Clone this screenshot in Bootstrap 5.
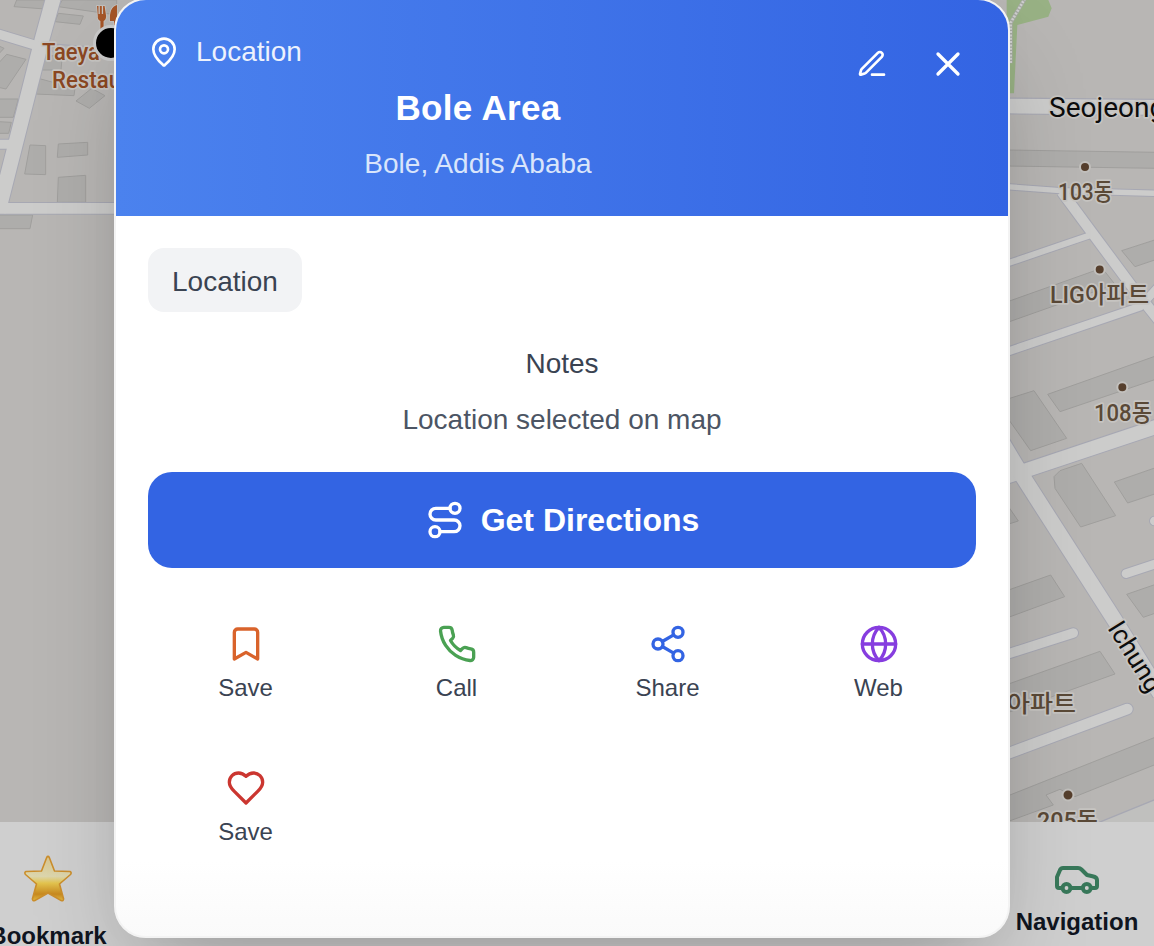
<!DOCTYPE html>
<html lang="en">
<head>
<meta charset="utf-8">
<meta name="viewport" content="width=device-width, initial-scale=1">
<title>Bole Area</title>
<link href="https://cdn.jsdelivr.net/npm/bootstrap@5.3.0/dist/css/bootstrap.min.css" rel="stylesheet">
<style>
body{font-family:"Liberation Sans",Arial,sans-serif;background:#b8b6b4;height:946px}
.map-layer{inset:0;width:1154px;height:822px}
.road{fill:none;stroke:#cccccb}
.road-edge{fill:none;stroke:#a7a8b3}
.bldg{fill:#aeadab;stroke:#a09f9d}
.map-label{font-family:Roboto,"Noto Sans CJK KR",sans-serif;paint-order:stroke;stroke:#c6c4c1;stroke-width:3.5px;stroke-linejoin:round;fill:#5a4937;font-weight:500;font-size:24px}
.bottom-bar{top:822px;height:124px;background:#cfcfcf;color:#10151f;font-size:24px;line-height:32px;font-weight:700}
.bottom-bar svg{flex:none}
.tab-bookmark{width:140px;margin-left:-22px;padding-top:30px}
.tab-nav{width:154px;padding-top:34px}
.place-sheet{width:896px;height:940px;margin:-2px 0 0 114px;border:2px solid #f3f3f3;border-radius:32px;box-shadow:0 50px 100px -24px rgba(0,0,0,.25),0 0 44px rgba(0,0,0,.02);background:linear-gradient(#fff 92%,#fafafa)}
.sheet-head{background:linear-gradient(90deg,#4b82ee,#3364e3);padding:32px;height:216px;border-radius:30px 30px 0 0;color:#fff}
.head-main{margin-right:36px}
.fs-body{font-size:28px;line-height:40px}
.kind{opacity:.9}
.place-title{font-size:35px;letter-spacing:.35px;line-height:56px;font-weight:700}
.place-sub{color:#d9e5fb}
.head-btn{width:56px;height:64px;color:#fff}
.ico{fill:none;stroke:currentColor;stroke-width:2;stroke-linecap:round;stroke-linejoin:round;display:block;flex:none}
.sheet-body{padding:32px}
.tag{background:#f2f3f5;color:#3a4352;border-radius:16px;padding:14px 24px 10px}
.c-700{color:#3a4352}.c-600{color:#4c5564}
.directions{background:#3364e3;color:#fff;height:96px;border-radius:24px;font-size:32px;font-weight:700;margin-top:32px}
.directions:hover{background:#2b57cf;color:#fff}
.actions{display:grid;grid-template-columns:repeat(4,1fr);gap:16px;margin-top:32px}
.action{height:128px;padding:24px 0;font-size:24px;line-height:32px}
</style>
</head>
<body class="position-relative overflow-hidden">
<svg class="map-layer position-absolute" viewBox="0 0 1154 822" aria-hidden="true">
  <!-- west side, drawn at three units per pixel -->
  <g transform="scale(.33333)" stroke-width="3">
    <g class="bldg">
      <path d="M50 0H150L135 27 42 20Z M187 0 175 20 350 45V0Z M175 40 250 48 240 73 165 65Z M-5 137 12 145-5 163Z M20 163 78 178 18 267-5 262V190Z M-5 297H55L40 352H-5Z M-5 365 34 367 26 400H-5Z M90 435 137 437V524L74 522Z M175 432 263 427V465L172 472Z M175 532 257 526V607H172Z M-5 645H98L90 686H-5Z M275 265 315 287 268 325 228 303Z M115 235 225 265 222 287 105 282Z M128 170 187 165 183 210 125 210Z"/>
    </g>
    <g class="road-edge"><path d="M160-5 126 118 42 450-5 635" stroke-width="50"/><path d="M-5 102 120 140M-5 433H45" stroke-width="33"/><path d="M130 140 342 156" stroke-width="24"/><path d="M-5 625H350" stroke-width="38"/></g>
    <g class="road"><path d="M160-5 126 118 42 450-5 635" stroke-width="44"/><path d="M-5 102 120 140M-5 433H45" stroke-width="27"/><path d="M-5 625H350" stroke-width="32"/></g>
    <path d="M140 142 342 156" fill="none" stroke="#b8b6b4" stroke-width="18"/>
  </g>
  <!-- east side -->
  <g transform="translate(1000) scale(.33333)" stroke-width="3">
    <path d="M20 0H145L155 25 145 50 52 75 42 280H20Z" fill="#98b184"/>
    <path d="M75-5 32 68V190" fill="none" stroke="#a5aaa2" stroke-width="12"/><path d="M75-5 32 68V190" fill="none" stroke="#cfcfcf" stroke-width="8" stroke-dasharray="6 4"/>
    <g class="bldg">
      <path d="M20 450 470 457V505L20 498Z"/>
      <path transform="translate(0 690)" d="M20 216 290 120 315 125 345 163 20 278Z M365 62 470 28V88L405 110Z M143 493 470 377V447L180 545Z M20 508 102 482 200 625 92 662 20 560Z"/>
      <path transform="translate(0 1380)" d="M180 32 245 10 347 167 242 201 165 85 162 50Z M343 66 470 22V100L383 129Z M380 403 470 372V458L430 472Z M20 392 152 345 194 410 20 474Z M20 674 300 574 345 642 20 759Z M20 132 55 183 20 194Z"/>
      <path transform="translate(0 2070)" d="M20 319 470 140V222L225 320 180 298 138 315 160 345 20 396Z"/>
    </g>
    <path d="M290 2470 470 2397V2470Z" fill="#c0c0be" stroke="#a7a8b3" stroke-width="4"/>
    <g class="road-edge"><path d="M20 318 470 322" stroke-width="51"/><path d="M20 560 180 572 470 580" stroke-width="22"/><path d="M185 575 270 690 400 865 480 965" stroke-width="37"/><path d="M20 791 278 703" stroke-width="24"/><path d="M20 1056 420 920 480 855" stroke-width="30"/><path d="M20 1430 470 1280" stroke-width="48"/><path d="M-10 1300 65 1425 345 1862 480 2080" stroke-width="52"/><g stroke-linecap="round"><path d="M378 1721 480 1687M463 1563H480" stroke-width="32"/><path d="M20 1963 220 1899" stroke-width="34"/><path d="M20 2262 382 2127" stroke-width="38"/></g></g>
    <g class="road"><path d="M20 318 470 322" stroke-width="44"/><path d="M20 560 180 572 470 580" stroke-width="16"/><path d="M185 575 270 690 400 865 480 965" stroke-width="31"/><path d="M20 791 278 703" stroke-width="18"/><path d="M20 1056 420 920 480 855" stroke-width="24"/><path d="M20 1430 470 1280" stroke-width="42"/><path d="M-10 1300 65 1425 345 1862 480 2080" stroke-width="46"/><g stroke-linecap="round"><path d="M378 1721 480 1687M463 1563H480" stroke-width="26"/><path d="M20 1963 220 1899" stroke-width="28"/><path d="M20 2262 382 2127" stroke-width="32"/></g></g>
  </g>
  <g fill="#563f2d" stroke="#c2c0bd" stroke-width="2"><circle cx="1085" cy="167" r="5"/><circle cx="1099.700" cy="269.500" r="5"/><circle cx="1122.300" cy="387.300" r="5"/><circle cx="1068" cy="795" r="5.500"/></g>
  <g class="map-label">
    <text x="42" y="60" textLength="58" lengthAdjust="spacingAndGlyphs" style="fill:#8b4722">Taeya</text>
    <text x="52" y="88" textLength="69" lengthAdjust="spacingAndGlyphs" style="fill:#8b4722">Restau</text>
    <text x="1049" y="117" style="fill:#0c0c0c;font-weight:400;font-size:28px">Seojeong</text>
    <text x="1058" y="200" textLength="55" lengthAdjust="spacingAndGlyphs">103동</text>
    <text x="1050" y="303" textLength="99" lengthAdjust="spacingAndGlyphs">LIG아파트</text>
    <text x="1094" y="421" textLength="58" lengthAdjust="spacingAndGlyphs">108동</text>
    <text x="1007" y="712" textLength="69" lengthAdjust="spacingAndGlyphs">아파트</text>
    <text x="1037" y="829" textLength="61" lengthAdjust="spacingAndGlyphs">205동</text>
    <text transform="translate(1107 628) rotate(58)" style="fill:#0c0c0c;font-weight:400;font-size:26px">Ichung</text>
  </g>
  <g fill="#a55529" stroke="#c6c4c1" stroke-width="1.500" paint-order="stroke"><path d="M97 6h1.500v8h1.300V6h2v8h1.300V6h1.500l1.500 10q0 4-2.500 5v8h-3.200v-8q-3-1-2.600-5Z"/><path d="M117 5v24h-3v-8h-4q-1-14 7-16Z"/></g>
  <circle cx="111" cy="43" r="16.500" stroke="#c9c9c9" stroke-width="3"/>
</svg>

<nav class="bottom-bar position-absolute start-0 end-0 d-flex justify-content-between">
  <div class="tab-bookmark d-flex flex-column align-items-center">
    <svg width="52" height="52" viewBox="0 0 52 52"><defs><linearGradient id="gold" x2="0" y2="1"><stop offset="0" stop-color="#d9c58e"/><stop offset=".45" stop-color="#dcd6ad"/><stop offset=".6" stop-color="#e3c44f"/><stop offset=".85" stop-color="#c8891f"/><stop offset="1" stop-color="#e2bb42"/></linearGradient></defs><path d="M27.300 5.500 32.500 19 48 19.500Q50 20.500 48.500 22.500L37.500 32 41.600 47Q41.400 49.400 39.200 48.600L26 41 12.800 48.600Q10.600 49.400 10.400 47L14.500 32 3.500 22.500Q2 20.500 4 19.500L19.500 19 24.700 5.500Q26 3.300 27.300 5.500Z" fill="url(#gold)" stroke="#cb8e2c" stroke-width="1.600" stroke-linejoin="round"/></svg>
    <span style="margin-top:16px">Bookmark</span>
  </div>
  <div class="tab-nav d-flex flex-column align-items-center">
    <svg width="48" height="48" viewBox="0 0 48 48" fill="none" stroke="#38785a" stroke-width="4" stroke-linejoin="round" stroke-linecap="round"><circle cx="13.500" cy="32" r="4"/><circle cx="33.800" cy="32" r="4"/><path d="M9.500 32H6Q4 32 4 30V21L7 14Q8 12 10 12H25Q27 12 28.500 13.500L34 19 39.500 20.200Q44 21.200 44 24V30Q44 32 42 32H37.800M17.500 32H29.800"/></svg>
    <span style="margin-top:2px">Navigation</span>
  </div>
</nav>

<main class="place-sheet position-relative">
  <header class="sheet-head d-flex align-items-start">
    <div class="head-main flex-grow-1">
      <div class="d-flex align-items-center gap-3 fs-body">
        <svg class="ico" width="32" height="32" viewBox="0 0 24 24"><path d="M20 10c0 4.993-5.539 10.193-7.399 11.799a1 1 0 0 1-1.202 0C9.539 20.193 4 14.993 4 10a8 8 0 0 1 16 0"/><circle cx="12" cy="10" r="3"/></svg>
        <span class="kind">Location</span>
      </div>
      <h1 class="place-title text-center my-2">Bole Area</h1>
      <p class="place-sub fs-body text-center mb-0">Bole, Addis Ababa</p>
    </div>
    <div class="d-flex" style="gap:20px">
      <button class="head-btn btn p-0 border-0 d-flex align-items-center justify-content-center" aria-label="Edit"><svg class="ico" width="32" height="32" viewBox="0 0 24 24"><path d="M12 20h9M16.376 3.622a1 1 0 0 1 3.002 3.002L7.368 18.635a2 2 0 0 1-.855.506l-2.872.838a.5.5 0 0 1-.62-.62l.838-2.872a2 2 0 0 1 .506-.854z"/></svg></button>
      <button class="head-btn btn p-0 border-0 d-flex align-items-center justify-content-center" aria-label="Close"><svg class="ico" width="40" height="40" viewBox="0 0 24 24"><path d="M18 6 6 18M6 6l12 12"/></svg></button>
    </div>
  </header>
  <div class="sheet-body">
    <div class="d-flex"><span class="tag fs-body">Location</span></div>
    <h2 class="fs-body fw-normal text-center c-700 mb-3" style="margin-top:32px">Notes</h2>
    <p class="fs-body text-center c-600 mb-0">Location selected on map</p>
    <button class="directions btn border-0 w-100 d-flex align-items-center justify-content-center gap-3"><svg class="ico" width="40" height="40" viewBox="0 0 24 24"><circle cx="6" cy="19" r="3"/><path d="M9 19h8.500a3.500 3.500 0 0 0 0-7h-11a3.500 3.500 0 0 1 0-7H15"/><circle cx="18" cy="5" r="3"/></svg>Get Directions</button>
    <div class="actions">
      <a class="action d-flex flex-column align-items-center gap-2 text-decoration-none c-700"><svg class="ico" style="color:#d9632b" width="40" height="40" viewBox="0 0 24 24"><path d="m19 21-7-4-7 4V5a2 2 0 0 1 2-2h10a2 2 0 0 1 2 2z"/></svg>Save</a>
      <a class="action d-flex flex-column align-items-center gap-2 text-decoration-none c-700"><svg class="ico" style="color:#4aa153" width="40" height="40" viewBox="0 0 24 24"><path d="M22 16.920v3a2 2 0 0 1-2.180 2 19.790 19.790 0 0 1-8.630-3.070 19.500 19.500 0 0 1-6-6 19.790 19.790 0 0 1-3.070-8.670A2 2 0 0 1 4.110 2h3a2 2 0 0 1 2 1.720 12.840 12.840 0 0 0 .7 2.810 2 2 0 0 1-.45 2.110L8.090 9.910a16 16 0 0 0 6 6l1.270-1.270a2 2 0 0 1 2.110-.45 12.840 12.840 0 0 0 2.810.7A2 2 0 0 1 22 16.920z"/></svg>Call</a>
      <a class="action d-flex flex-column align-items-center gap-2 text-decoration-none c-700"><svg class="ico" style="color:#3364e3" width="40" height="40" viewBox="0 0 24 24"><circle cx="18" cy="5" r="3"/><circle cx="6" cy="12" r="3"/><circle cx="18" cy="19" r="3"/><path d="m8.590 13.510 6.830 3.980M15.410 6.510l-6.820 3.980"/></svg>Share</a>
      <a class="action d-flex flex-column align-items-center gap-2 text-decoration-none c-700"><svg class="ico" style="color:#863ddf" width="40" height="40" viewBox="0 0 24 24"><circle cx="12" cy="12" r="10"/><path d="M12 2a14.500 14.500 0 0 0 0 20 14.500 14.500 0 0 0 0-20M2 12h20"/></svg>Web</a>
      <a class="action d-flex flex-column align-items-center gap-2 text-decoration-none c-700"><svg class="ico" style="color:#cb3630" width="40" height="40" viewBox="0 0 24 24"><path d="M19 14c1.490-1.460 3-3.210 3-5.500A5.500 5.500 0 0 0 16.500 3c-1.760 0-3 .5-4.500 2-1.500-1.500-2.740-2-4.500-2A5.500 5.500 0 0 0 2 8.500c0 2.300 1.500 4.050 3 5.500l7 7Z"/></svg>Save</a>
    </div>
  </div>
</main>
<script src="https://cdn.jsdelivr.net/npm/bootstrap@5.3.0/dist/js/bootstrap.bundle.min.js"></script>
</body>
</html>
